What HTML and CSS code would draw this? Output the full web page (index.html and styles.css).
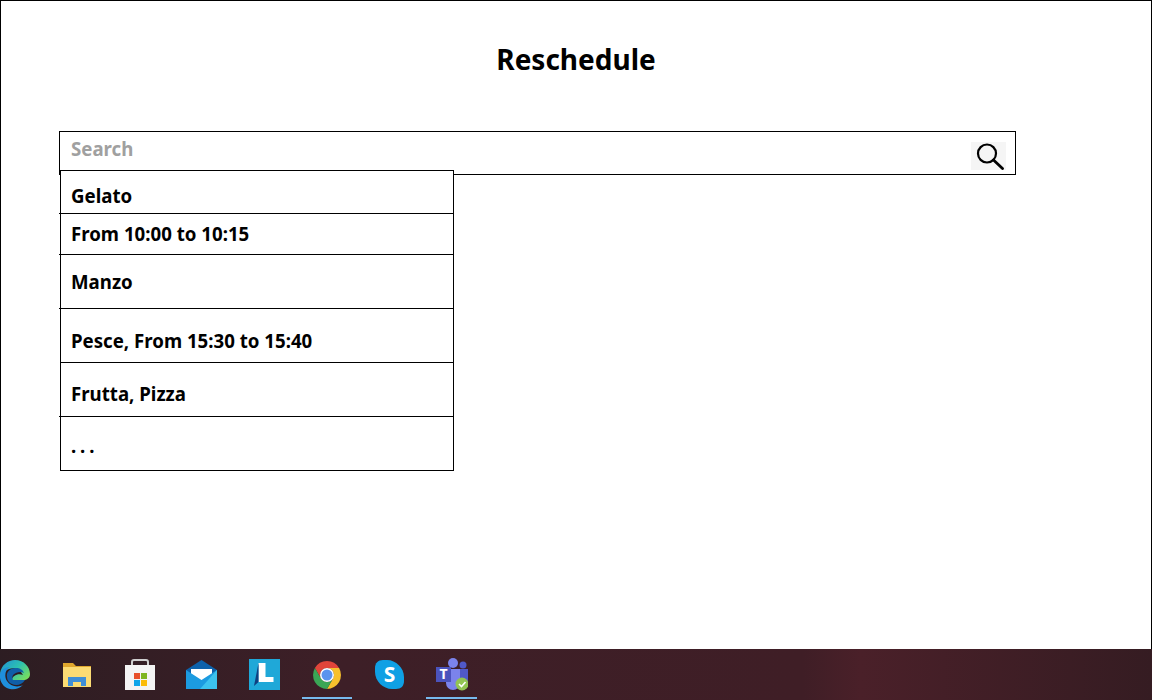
FILE: index.html
```html
<!DOCTYPE html>
<html lang="en">
<head>
<meta charset="utf-8">
<title>Reschedule</title>
<link rel="stylesheet" href="styles.css">
</head>
<body>
<main class="screen">
  <h1 class="title">Reschedule</h1>
  <div class="search-wrap">
    <div class="search">
      <span class="placeholder">Search</span>
      <span class="search-btn">
        <svg width="35" height="28" viewBox="0 0 35 28"><circle cx="16" cy="11.500" r="9" fill="none" stroke="#000" stroke-width="2.200"/><path d="M22.500 18l9 8.500" stroke="#000" stroke-width="2.800" stroke-linecap="round"/></svg>
      </span>
    </div>
    <ul class="results">
      <li class="row row-a over">Gelato</li>
      <li class="row row-b over">From 10:00 to 10:15</li>
      <li class="row row-c over">Manzo</li>
      <li class="row row-d">Pesce, From 15:30 to 15:40</li>
      <li class="row row-e over">Frutta, Pizza</li>
      <li class="row row-f">. . .</li>
    </ul>
  </div>
</main>
<footer class="taskbar">
  <span class="tb-icon">
    <svg width="32" height="32" viewBox="0 0 32 32"><defs><linearGradient id="eg" x1="0" y1="0" x2="1" y2="0.700"><stop offset="0" stop-color="#1f8fd8"/><stop offset=".55" stop-color="#2cc0b0"/><stop offset="1" stop-color="#74dc62"/></linearGradient></defs><path d="M1 15C2 6 9 1 16 1c9 0 15 7 15 14 0 4-3 6-7 6H13c0-4 6-7 11-5-3-6-9-8-14-6C5 12 2 15 1 15z" fill="url(#eg)"/><path d="M1 15C2 11 6 8 11 8c-5 3-6 9-3 14 3 5 10 7 16 4-4 4-9 5-13 4C5 29 0 23 1 15z" fill="#1f8fdc"/><path d="M8 18c-1-5 3-9 9-9 4 0 7 2 8 5-3-2-8-1-11 2-1 2-1 4 0 5h12c-3 5-9 6-13 4-3-1-5-4-5-7z" fill="#0f5ea8"/></svg>
  </span>
  <span class="tb-icon">
    <svg width="28" height="24" viewBox="0 0 28 24"><path d="M0 0h10l3 3h15v21H0z" fill="#e0a82e"/><path d="M0 4h28v20H0z" fill="#fbdc74"/><path d="M5 23v-9h18v9h-5v-4h-8v4z" fill="#3f8fd6"/></svg>
  </span>
  <span class="tb-icon">
    <svg width="30" height="31" viewBox="0 0 30 31"><path d="M7 7V3q0-2 2-2h12q2 0 2 2v4" fill="none" stroke="#cfcfcf" stroke-width="2"/><path d="M0 6h30v25H0z" fill="#f4f4f4"/><path d="M9 14h6v6H9z" fill="#e8502a"/><path d="M16 14h6v6h-6z" fill="#7eb51f"/><path d="M9 21h6v6H9z" fill="#0ea5e9"/><path d="M16 21h6v6h-6z" fill="#fbbc09"/></svg>
  </span>
  <span class="tb-icon">
    <svg width="31" height="29" viewBox="0 0 31 29"><path d="M0 10L15.500 0 31 10v19H0z" fill="#0d62ab"/><path d="M5 9h21v8l-10.500 5L5 17z" fill="#fff"/><path d="M0 10l15.500 10L31 10v19H0z" fill="#1c9be0"/><path d="M31 10v19H14z" fill="#3cc2ee"/></svg>
  </span>
  <span class="tb-icon">
    <svg width="31" height="31" viewBox="0 0 31 31"><path d="M0 0h31v31H0z" fill="#1fa8d8"/><path d="M9.500 4h7v14h8v5h-15z" fill="#fff"/><path d="M5 27l4.500-4V4z" fill="#0f3f80"/></svg>
  </span>
  <span class="tb-icon active">
    <svg width="30" height="30" viewBox="0 0 30 30"><path d="M15 1A14 14 0 0 1 27.100 8H15A7 7 0 0 0 9 18.500L2.900 8A14 14 0 0 1 15 1z" fill="#e0453a"/><path d="M27.100 8A14 14 0 0 1 15 29l6-10.500A7 7 0 0 0 15 8z" fill="#f6c02d"/><path d="M2.900 8L9 18.500a7 7 0 0 0 12 0L15 29A14 14 0 0 1 2.900 8z" fill="#3aa655"/><circle cx="15" cy="15" r="7" fill="#fff"/><circle cx="15" cy="15" r="5.500" fill="#5a93ee"/></svg>
  </span>
  <span class="tb-icon">
    <svg width="29" height="29" viewBox="0 0 29 29"><path d="M8 0h4c9 0 17 8 17 17v4c0 5-3 8-8 8h-4C8 29 0 21 0 12V8c0-5 3-8 8-8z" fill="#0fa0e4"/><text x="14.500" y="21.500" class="skype-s">S</text></svg>
  </span>
  <span class="tb-icon active">
    <svg width="32" height="34" viewBox="0 0 32 34"><circle cx="17" cy="5" r="5" fill="#7b83eb"/><circle cx="27" cy="7" r="3.500" fill="#5059c9"/><path d="M10 11h14v14a7 7 0 0 1-14 0z" fill="#7b83eb"/><path d="M24 11h8v11a4 4 0 0 1-8 0z" fill="#5059c9"/><path d="M0 9h15v15H0z" fill="#4b53bc"/><text x="7.500" y="21" class="teams-t">T</text><circle cx="26" cy="26" r="6.500" fill="#92c353"/><path d="M23 26l2.500 2.500 4-4.500" fill="none" stroke="#fff" stroke-width="1.600"/></svg>
  </span>
</footer>
</body>
</html>
```
FILE: styles.css
```css
* { box-sizing: border-box; }
html, body { margin: 0; padding: 0; }
body {
  width: 1152px;
  height: 700px;
  overflow: hidden;
  font-family: "Noto Sans", sans-serif;
  color: #000;
  background: #fff;
}
.screen {
  height: 649px;
  border: 1px solid #000;
  border-bottom: 0;
  padding: 40px 0 0 58px;
}
.title {
  margin: 0 0 0 -58px;
  height: 90px;
  font-size: 28px;
  line-height: 36px;
  font-weight: 700;
  text-align: center;
}
.search-wrap { position: relative; width: 957px; }
.search {
  height: 44px;
  border: 1px solid #000;
  display: flex;
  justify-content: space-between;
  padding: 5px 9px 0 11px;
}
.placeholder {
  font-size: 18.670px;
  line-height: 24px;
  font-weight: 700;
  color: #a0a0a0;
}
.search-btn {
  width: 35px;
  height: 28px;
  margin-top: 5px;
  background: #f5f5f5;
  display: flex;
}
.results {
  position: absolute;
  left: 1px;
  top: 39px;
  width: 394px;
  margin: 0;
  padding: 0;
  list-style: none;
  background: #fff;
  border: 1px solid #000;
  border-bottom: 0;
}
.row {
  position: relative;
  padding-left: 10px;
  border-bottom: 1px solid #000;
  font-size: 18.670px;
  font-weight: 700;
  line-height: 24px;
}
.over::before {
  content: "";
  position: absolute;
  left: -2px;
  bottom: -1px;
  width: 2px;
  height: 1px;
  background: #000;
}
.row-a { height: 43px; padding-top: 13px; }
.row-b { height: 41px; padding-top: 8px; }
.row-c { height: 54px; padding-top: 15px; }
.row-d { height: 54px; padding-top: 20px; }
.row-e { height: 54px; padding-top: 19px; }
.row-f { height: 54px; padding-top: 17px; word-spacing: -1px; }
.taskbar {
  height: 51px;
  background: linear-gradient(90deg, #2c1d22 0%, #3d1f27 30%, #3f1e26 70%, #4a2029 75%, #351c22 100%);
  display: flex;
  align-items: center;
  margin-left: -16.400px;
  width: 1169px;
}
.tb-icon {
  position: relative;
  width: 62.400px;
  height: 51px;
  display: flex;
  align-items: center;
  justify-content: center;
}
.tb-icon.active::after {
  content: "";
  position: absolute;
  left: 6px;
  right: 6px;
  bottom: 1px;
  height: 2px;
  background: #76b9ed;
}
.skype-s {
  font-family: "Noto Sans", sans-serif;
  font-size: 21px;
  font-weight: 700;
  fill: #fff;
  text-anchor: middle;
}
.teams-t {
  font-family: "Noto Sans", sans-serif;
  font-size: 14px;
  font-weight: 700;
  fill: #fff;
  text-anchor: middle;
}
```
